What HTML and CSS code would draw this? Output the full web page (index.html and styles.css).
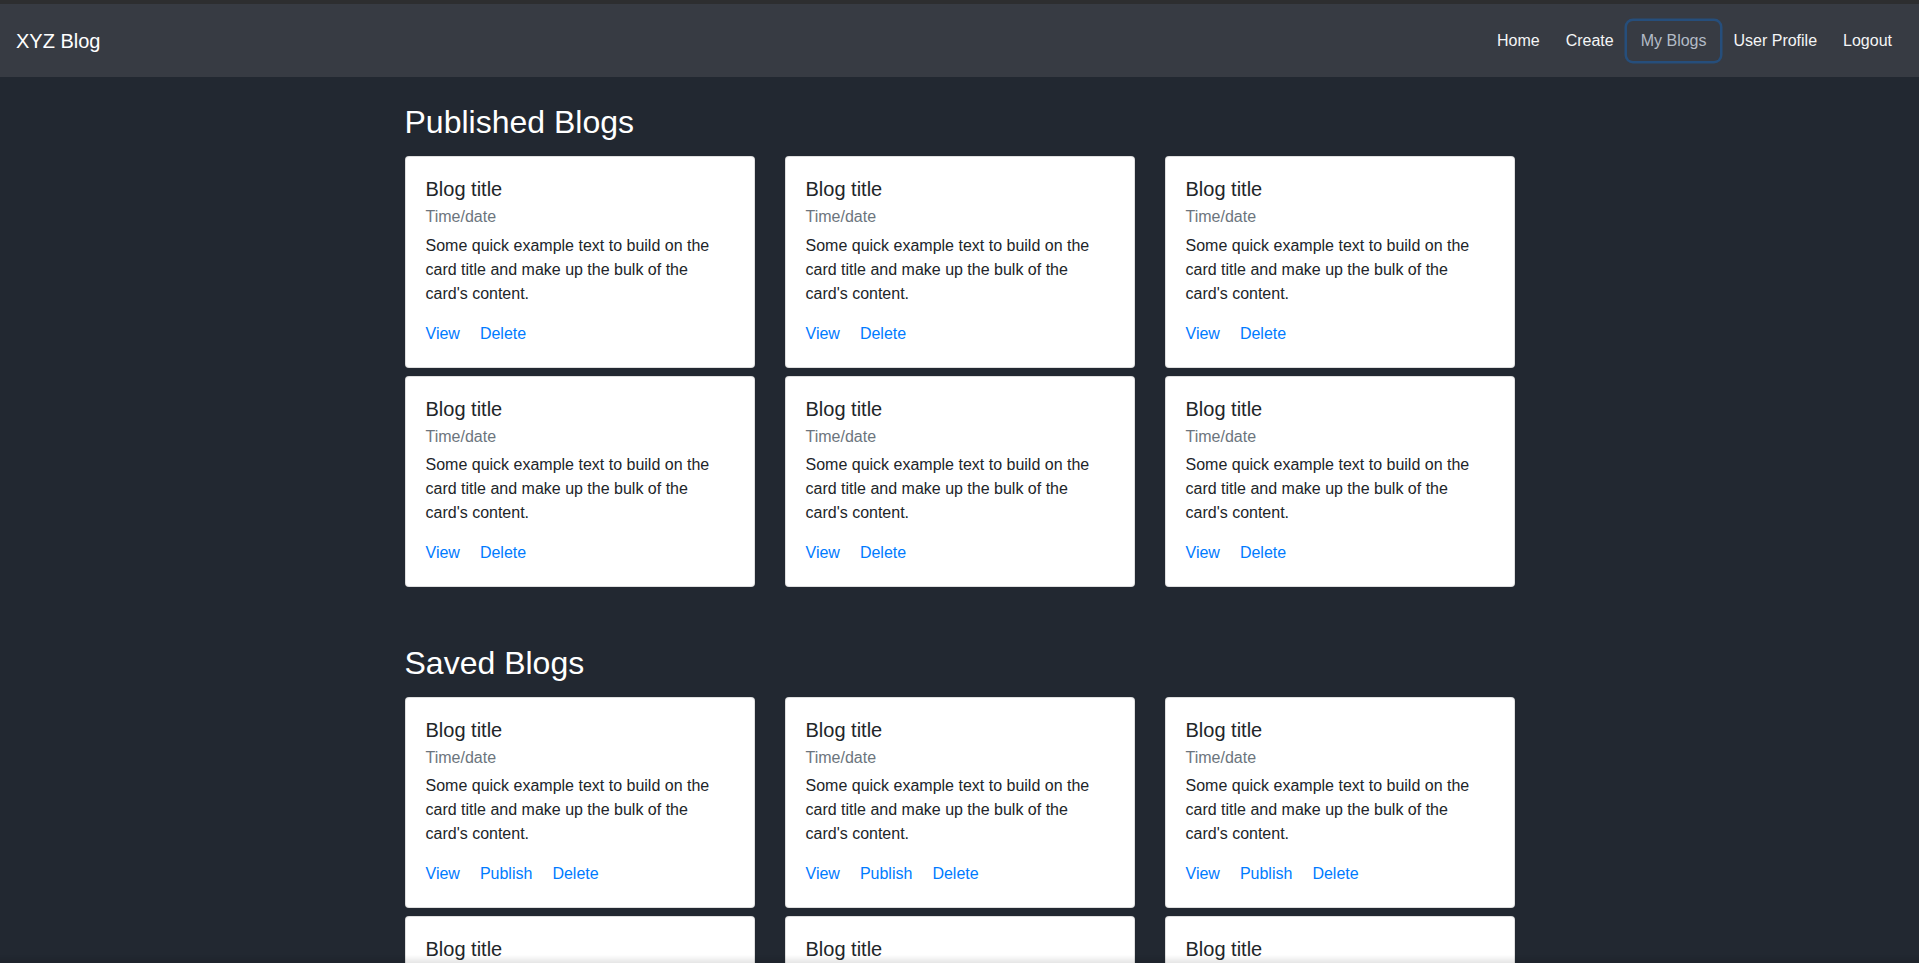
FILE: index.html
```html
<!DOCTYPE html>
<html lang="en">
<head>
<meta charset="utf-8">
<title>XYZ Blog</title>
<link rel="stylesheet" href="styles.css">
</head>
<body>
<div class="topstrip"></div>
<nav class="navbar">
  <a class="brand" href="#">XYZ Blog</a>
  <ul class="nav">
    <li><a class="nav-link" href="#">Home</a></li>
    <li><a class="nav-link" href="#">Create</a></li>
    <li><a class="nav-link active" href="#">My Blogs</a></li>
    <li><a class="nav-link" href="#">User Profile</a></li>
    <li><a class="nav-link" href="#">Logout</a></li>
  </ul>
</nav>
<main class="container">
  <section class="section">
    <h2 class="section-title">Published Blogs</h2>
    <div class="grid">
      <div class="card"><h5 class="card-title">Blog title</h5><h6 class="card-subtitle">Time/date</h6><p class="card-text">Some quick example text to build on the card title and make up the bulk of the card's content.</p><div class="links"><a href="#">View</a><a href="#">Delete</a></div></div>
      <div class="card"><h5 class="card-title">Blog title</h5><h6 class="card-subtitle">Time/date</h6><p class="card-text">Some quick example text to build on the card title and make up the bulk of the card's content.</p><div class="links"><a href="#">View</a><a href="#">Delete</a></div></div>
      <div class="card"><h5 class="card-title">Blog title</h5><h6 class="card-subtitle">Time/date</h6><p class="card-text">Some quick example text to build on the card title and make up the bulk of the card's content.</p><div class="links"><a href="#">View</a><a href="#">Delete</a></div></div>
      <div class="card"><h5 class="card-title">Blog title</h5><h6 class="card-subtitle">Time/date</h6><p class="card-text">Some quick example text to build on the card title and make up the bulk of the card's content.</p><div class="links"><a href="#">View</a><a href="#">Delete</a></div></div>
      <div class="card"><h5 class="card-title">Blog title</h5><h6 class="card-subtitle">Time/date</h6><p class="card-text">Some quick example text to build on the card title and make up the bulk of the card's content.</p><div class="links"><a href="#">View</a><a href="#">Delete</a></div></div>
      <div class="card"><h5 class="card-title">Blog title</h5><h6 class="card-subtitle">Time/date</h6><p class="card-text">Some quick example text to build on the card title and make up the bulk of the card's content.</p><div class="links"><a href="#">View</a><a href="#">Delete</a></div></div>
    </div>
  </section>
  <section class="section saved">
    <h2 class="section-title">Saved Blogs</h2>
    <div class="grid">
      <div class="card"><h5 class="card-title">Blog title</h5><h6 class="card-subtitle">Time/date</h6><p class="card-text">Some quick example text to build on the card title and make up the bulk of the card's content.</p><div class="links"><a href="#">View</a><a href="#">Publish</a><a href="#">Delete</a></div></div>
      <div class="card"><h5 class="card-title">Blog title</h5><h6 class="card-subtitle">Time/date</h6><p class="card-text">Some quick example text to build on the card title and make up the bulk of the card's content.</p><div class="links"><a href="#">View</a><a href="#">Publish</a><a href="#">Delete</a></div></div>
      <div class="card"><h5 class="card-title">Blog title</h5><h6 class="card-subtitle">Time/date</h6><p class="card-text">Some quick example text to build on the card title and make up the bulk of the card's content.</p><div class="links"><a href="#">View</a><a href="#">Publish</a><a href="#">Delete</a></div></div>
      <div class="card"><h5 class="card-title">Blog title</h5><h6 class="card-subtitle">Time/date</h6><p class="card-text">Some quick example text to build on the card title and make up the bulk of the card's content.</p><div class="links"><a href="#">View</a><a href="#">Publish</a><a href="#">Delete</a></div></div>
      <div class="card"><h5 class="card-title">Blog title</h5><h6 class="card-subtitle">Time/date</h6><p class="card-text">Some quick example text to build on the card title and make up the bulk of the card's content.</p><div class="links"><a href="#">View</a><a href="#">Publish</a><a href="#">Delete</a></div></div>
      <div class="card"><h5 class="card-title">Blog title</h5><h6 class="card-subtitle">Time/date</h6><p class="card-text">Some quick example text to build on the card title and make up the bulk of the card's content.</p><div class="links"><a href="#">View</a><a href="#">Publish</a><a href="#">Delete</a></div></div>
    </div>
  </section>
</main>
<div class="bottom-shade"></div>
</body>
</html>
```
FILE: styles.css
```css
html {
  scrollbar-width: none;
}
html::-webkit-scrollbar {
  display: none;
}
body {
  margin: 0;
  background: #222831;
  font-family: "Liberation Sans", Arial, sans-serif;
  font-size: 16px;
  line-height: 1.5;
  color: #212529;
}
a {
  text-decoration: none;
}
.topstrip {
  height: 4px;
  background: #2d2e30;
}
.navbar {
  height: 73px;
  box-sizing: border-box;
  background: #373b43;
  display: flex;
  align-items: center;
  justify-content: space-between;
  padding: 0 14px 0 16px;
}
.brand {
  color: #ffffff;
  font-size: 20px;
  line-height: 30px;
}
.nav {
  display: flex;
  list-style: none;
  margin: 0;
  padding: 0;
}
.nav-link {
  display: block;
  padding: 8px 13px;
  color: #f4f5f6;
  line-height: 24px;
  border-radius: 6px;
}
.nav-link.active {
  padding: 8px 14px;
  color: #b3bcc7;
  box-shadow: 0 0 0 2.5px #264e7b;
}
.container {
  width: 1110px;
  margin: 0 auto;
  padding-top: 26px;
}
.section-title {
  margin: 0 0 15px;
  font-size: 32px;
  font-weight: 400;
  line-height: 1.2;
  color: #ffffff;
}
.saved {
  margin-top: 57px;
}
.grid {
  display: grid;
  grid-template-columns: repeat(3, 1fr);
  column-gap: 30px;
  row-gap: 8px;
}
.card {
  background: #ffffff;
  border: 1px solid rgba(0, 0, 0, 0.125);
  border-radius: 4px;
  padding: 20px 20px 21px;
}
.card-title {
  margin: 0 0 12px;
  font-size: 20px;
  font-weight: 400;
  line-height: 1.2;
  color: #212529;
}
.card-subtitle {
  margin: -6px 0 7px;
  font-size: 16px;
  font-weight: 400;
  line-height: 1.2;
  color: #6c757d;
}
.card-text {
  margin: 0 0 16px;
}
.links {
  display: flex;
  gap: 20px;
}
.links a {
  color: #007bff;
}
.bottom-shade {
  position: fixed;
  left: 0;
  right: 0;
  bottom: 0;
  height: 8px;
  background: linear-gradient(to bottom, rgba(0, 0, 0, 0), rgba(0, 0, 0, 0.1));
  pointer-events: none;
}
```
